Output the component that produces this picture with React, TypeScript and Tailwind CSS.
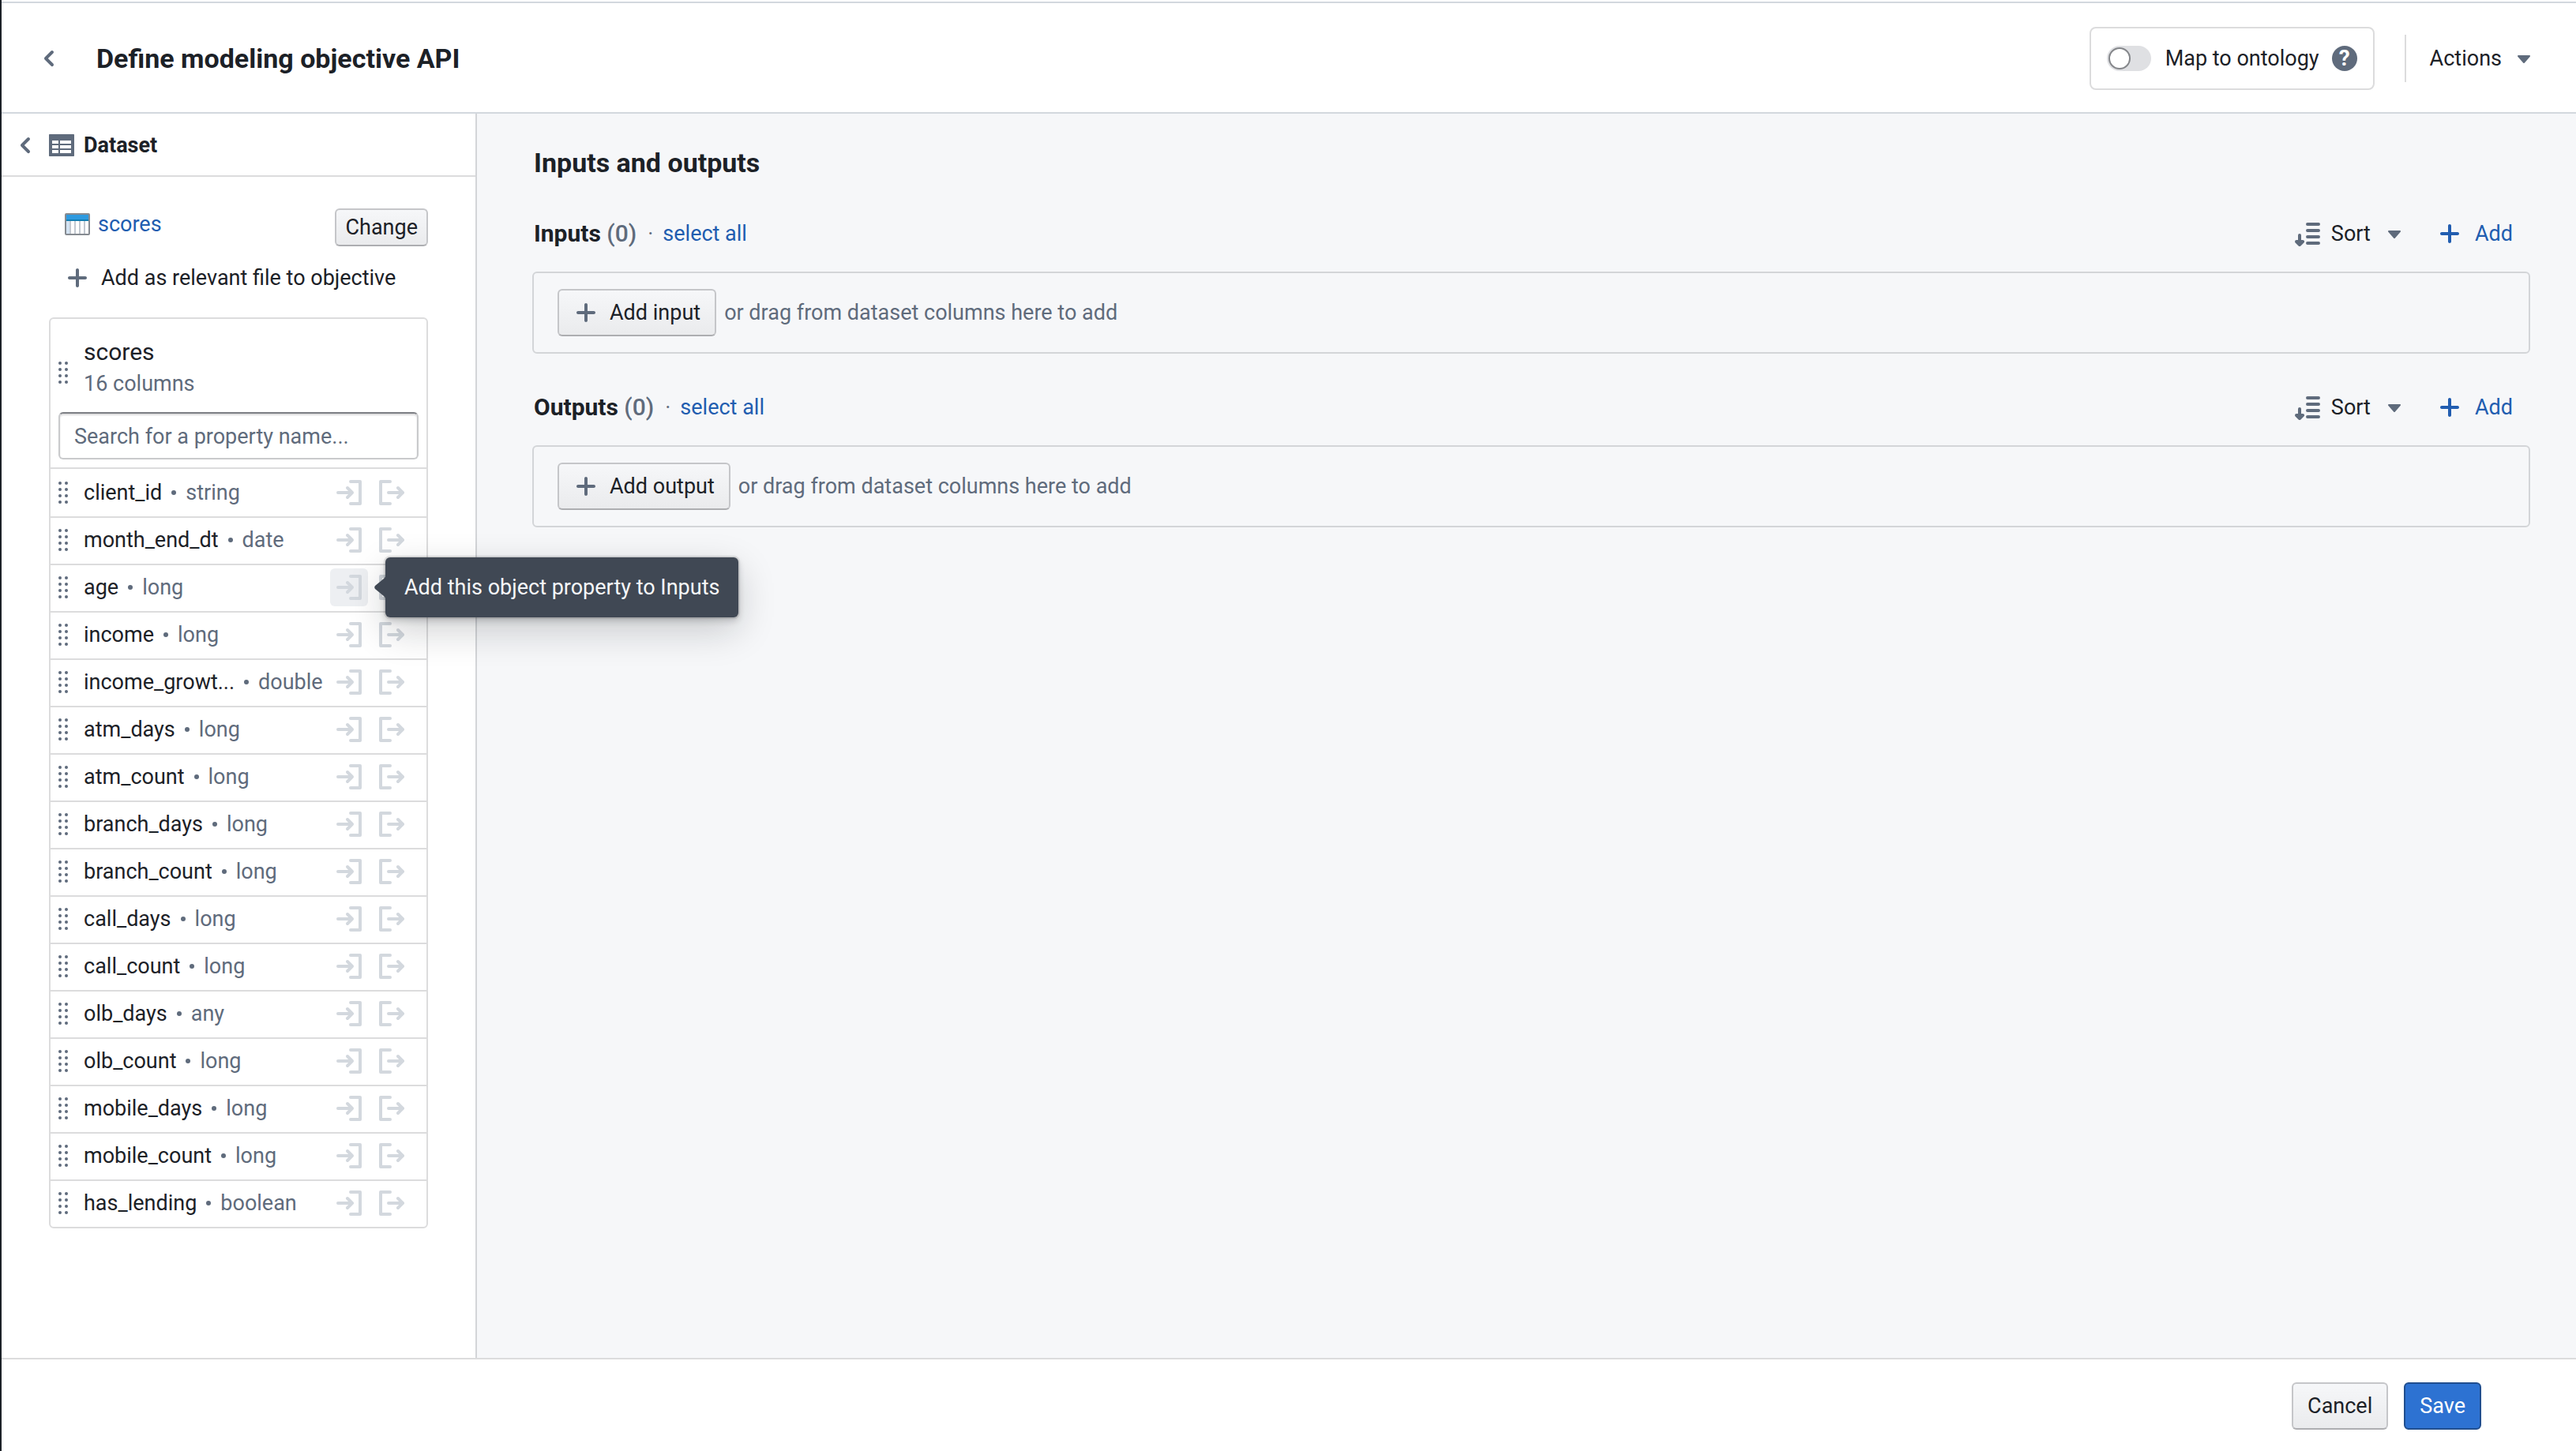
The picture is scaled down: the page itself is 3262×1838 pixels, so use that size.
import React, { useState } from 'react';

type Column = { name: string; type: string };

const columns: Column[] = [
  { name: 'client_id', type: 'string' },
  { name: 'month_end_dt', type: 'date' },
  { name: 'age', type: 'long' },
  { name: 'income', type: 'long' },
  { name: 'income_growt...', type: 'double' },
  { name: 'atm_days', type: 'long' },
  { name: 'atm_count', type: 'long' },
  { name: 'branch_days', type: 'long' },
  { name: 'branch_count', type: 'long' },
  { name: 'call_days', type: 'long' },
  { name: 'call_count', type: 'long' },
  { name: 'olb_days', type: 'any' },
  { name: 'olb_count', type: 'long' },
  { name: 'mobile_days', type: 'long' },
  { name: 'mobile_count', type: 'long' },
  { name: 'has_lending', type: 'boolean' },
];

const defaultButton =
  'flex items-center justify-center rounded-md border-2 border-[#c5c6c9] border-b-[#adaeb1] bg-linear-to-b from-[#f6f7f9] to-[#eaebed] cursor-pointer';

function ChevronLeft() {
  return (
    <svg viewBox="0 0 16 16" className="size-8 shrink-0 fill-[#5f6b7c]" aria-hidden="true">
      <path d="M7.41 8l3.29-3.29c.19-.18.3-.43.3-.71a1.003 1.003 0 00-1.71-.71l-4 4C5.11 7.47 5 7.72 5 8c0 .28.11.53.29.71l4 4a1.003 1.003 0 001.42-1.42L7.41 8z" />
    </svg>
  );
}

function CaretDown() {
  return (
    <svg viewBox="0 0 16 16" className="size-8 shrink-0 fill-[#5f6b7c]" aria-hidden="true">
      <path d="M12 6.5c0-.28-.22-.5-.5-.5h-7a.495.495 0 00-.37.83l3.5 4c.09.1.22.17.37.17s.28-.07.37-.17l3.5-4c.08-.09.13-.2.13-.33z" />
    </svg>
  );
}

function Plus() {
  return (
    <svg viewBox="0 0 16 16" className="size-8 shrink-0 fill-current" aria-hidden="true">
      <path d="M13 7H9V3c0-.55-.45-1-1-1s-1 .45-1 1v4H3c-.55 0-1 .45-1 1s.45 1 1 1h4v4c0 .55.45 1 1 1s1-.45 1-1V9h4c.55 0 1-.45 1-1s-.45-1-1-1z" />
    </svg>
  );
}

function TableIcon() {
  return (
    <svg viewBox="0 0 16 16" className="size-8 shrink-0 fill-[#5f6b7c]" aria-hidden="true">
      <path d="M15.5 1H.5c-.3 0-.5.2-.5.5v13c0 .3.2.5.5.5h15c.3 0 .5-.2.5-.5v-13c0-.3-.2-.5-.5-.5zM6 13H2v-2h4v2zm0-3H2V8h4v2zm0-3H2V5h4v2zm8 6H7v-2h7v2zm0-3H7V8h7v2zm0-3H7V5h7v2z" />
    </svg>
  );
}

function DatasetIcon() {
  return (
    <svg viewBox="0 0 32 32" className="size-8 shrink-0" aria-hidden="true">
      <rect x="1" y="3" width="30" height="26" rx="1" fill="#fff" stroke="#868b91" strokeWidth="2" />
      <rect x="2" y="4" width="28" height="8" fill="#2e9ae0" />
      <rect x="2" y="10" width="28" height="2" fill="#147eb3" />
      <rect x="2" y="12" width="5" height="16" fill="#d3e3f3" />
      <path d="M7 12v16M13 12v16M19 12v16M25 12v16" stroke="#c3c9d1" strokeWidth="2" />
    </svg>
  );
}

function DragHandle() {
  return (
    <svg viewBox="0 0 16 16" className="size-8 shrink-0 fill-[#5f6b7c]" aria-hidden="true">
      {[2, 6, 10, 14].map(y => (
        <React.Fragment key={y}>
          <circle cx="6" cy={y} r="1" />
          <circle cx="10" cy={y} r="1" />
        </React.Fragment>
      ))}
    </svg>
  );
}

function SortIcon() {
  return (
    <svg
      viewBox="0 0 16 16"
      className="size-8 shrink-0 fill-none stroke-[#5f6b7c] stroke-2"
      strokeLinecap="round"
      strokeLinejoin="round"
      aria-hidden="true"
    >
      <path d="M8 2h7M8 6h7M8 10h7M8 14h7M3 9v5M1 13l2 2 2-2z" />
    </svg>
  );
}

function LogInIcon() {
  return (
    <svg
      viewBox="0 0 16 16"
      className="size-8 fill-none stroke-[#d3d8de] stroke-2"
      strokeLinecap="round"
      strokeLinejoin="round"
      aria-hidden="true"
    >
      <path d="M9 1h6v14H9M1 8h8M7 5l3 3-3 3" />
    </svg>
  );
}

function LogOutIcon() {
  return (
    <svg
      viewBox="0 0 16 16"
      className="size-8 fill-none stroke-[#d3d8de] stroke-2"
      strokeLinecap="round"
      strokeLinejoin="round"
      aria-hidden="true"
    >
      <path d="M7 1H1v14h6M6 8h8M12 5l3 3-3 3" />
    </svg>
  );
}

function Tooltip({ text }: { text: string }) {
  return (
    <div
      role="tooltip"
      className="absolute left-[70px] top-1/2 z-10 flex h-[76px] -translate-y-1/2 items-center whitespace-nowrap rounded-md bg-[#404854] px-6 text-[#f6f7f9] shadow-[0_0_0_2px_rgba(17,20,24,0.1),0_4px_8px_rgba(17,20,24,0.2),0_16px_48px_rgba(17,20,24,0.2)]"
    >
      <svg viewBox="0 0 16 36" className="absolute -left-[15px] top-5 h-9 w-4 fill-[#404854]" aria-hidden="true">
        <path d="M16 0c0 3-1 5-3 7L2 16c-1 1-1 3 0 4l11 9c2 2 3 4 3 7z" />
      </svg>
      {text}
    </div>
  );
}

function ColumnRow({ column, active }: { column: Column; active: boolean }) {
  return (
    <li className="flex h-[60px] items-center pr-5 shadow-[inset_0_2px_0_#dcdcdd] first:shadow-none">
      <DragHandle />
      <span className="ml-[10px] text-[#1c2127]">{column.name}</span>
      <span className="mx-3 size-[6px] shrink-0 rounded-full bg-[#5f6b7c]" />
      <span className="text-[#5f6b7c]">{column.type}</span>
      <div className="ml-auto flex gap-[6px]">
        <div className="relative">
          <button
            type="button"
            aria-label={`Add ${column.name} to inputs`}
            className={`flex size-12 items-center justify-center rounded-md cursor-pointer ${active ? 'bg-[#edeff2]' : ''}`}
          >
            <LogInIcon />
          </button>
          {active && <Tooltip text="Add this object property to Inputs" />}
        </div>
        <button
          type="button"
          aria-label={`Add ${column.name} to outputs`}
          className="flex size-12 items-center justify-center rounded-md cursor-pointer"
        >
          <LogOutIcon />
        </button>
      </div>
    </li>
  );
}

function DropSection({ title, action }: { title: string; action: string }) {
  return (
    <section className="mb-[38px]">
      <div className="flex h-[60px] items-center pl-[2px] pr-[22px]">
        <h3 className="text-[30px] font-bold">
          {title} <span className="font-medium text-[#5f6b7c]">(0)</span>
        </h3>
        <span className="ml-[14px] mr-3 text-[#5f6b7c]">·</span>
        <a href="#" className="text-[#215db0]">select all</a>
        <button type="button" className="ml-auto flex items-center cursor-pointer">
          <SortIcon />
          <span className="ml-[14px] mr-[14px]">Sort</span>
          <CaretDown />
        </button>
        <button type="button" className="ml-[38px] flex items-center gap-4 text-[#215db0] cursor-pointer">
          <Plus />
          Add
        </button>
      </div>
      <div className="mt-[18px] flex h-[104px] items-center rounded-md border-2 border-[#d3d5d8] pl-[30px]">
        <button type="button" className={`${defaultButton} h-[60px] px-[18px]`}>
          <span className="mr-[14px] flex text-[#5f6b7c]"><Plus /></span>
          {action}
        </button>
        <span className="ml-[10px] text-[#5f6b7c]">or drag from dataset columns here to add</span>
      </div>
    </section>
  );
}

export default function App() {
  const [mapped, setMapped] = useState(false);
  const [query, setQuery] = useState('');

  return (
    <div className="flex min-h-screen flex-col border-l-2 border-[#1c2127] bg-white font-['Roboto',sans-serif] text-[27px] leading-9 text-[#1c2127]">
      {/* Header */}
      <header className="mt-[2px] flex h-[142px] items-center border-y-2 border-[#d3d8de] pl-11 pr-[50px] pt-[2px]">
        <button type="button" aria-label="Back" className="flex cursor-pointer"><ChevronLeft /></button>
        <h1 className="ml-11 text-[34px] font-bold">Define modeling objective API</h1>
        <div className="ml-auto flex h-20 items-center rounded-lg border-2 border-[#dcdcdd] px-5">
          <label className="flex items-center gap-[18px] cursor-pointer">
            <input
              type="checkbox"
              role="switch"
              checked={mapped}
              onChange={e => setMapped(e.target.checked)}
              className="peer sr-only"
            />
            <span className="flex h-8 w-14 items-center rounded-full bg-[#dfe0e3] p-[2px] peer-checked:justify-end peer-checked:bg-[#2d72d2]">
              <span className="size-7 rounded-full border-2 border-[#84868a] bg-white" />
            </span>
            Map to ontology
          </label>
          <button
            type="button"
            aria-label="Help"
            className="ml-4 flex size-8 items-center justify-center rounded-full bg-[#5f6b7c] text-[28px] font-bold text-white cursor-pointer"
          >
            ?
          </button>
        </div>
        <div className="ml-[38px] h-[60px] w-[2px] bg-[#dcdcdd]" />
        <button type="button" className="ml-[30px] flex items-center gap-3 cursor-pointer">
          Actions
          <CaretDown />
        </button>
      </header>

      <div className="flex flex-1">
        {/* Dataset panel */}
        <aside className="w-[602px] shrink-0 border-r-2 border-[#d3d5d8]">
          <div className="flex h-20 items-center border-b-2 border-[#dcdcdd] pl-[14px] pt-[2px]">
            <button type="button" aria-label="Collapse" className="flex cursor-pointer"><ChevronLeft /></button>
            <span className="ml-[14px] flex"><TableIcon /></span>
            <h2 className="ml-3 font-bold">Dataset</h2>
          </div>

          <div className="px-[60px] pt-10">
            <div className="flex items-start pl-5">
              <a href="#" className="mt-[2px] flex items-center gap-[10px] text-[#215db0]">
                <DatasetIcon />
                scores
              </a>
              <button type="button" className={`${defaultButton} ml-auto h-12 px-[11px]`}>Change</button>
            </div>
            <button type="button" className="mt-[22px] flex items-center gap-[14px] pl-5 cursor-pointer">
              <span className="flex text-[#5f6b7c]"><Plus /></span>
              Add as relevant file to objective
            </button>

            <div className="mt-8 rounded-md border-2 border-[#dcdcdd]">
              <div className="flex items-center pt-[22px]">
                <span className="mt-3 flex"><DragHandle /></span>
                <div className="ml-[10px]">
                  <div className="text-[30px] leading-10">scores</div>
                  <div className="text-[#5f6b7c] leading-10">16 columns</div>
                </div>
              </div>
              <div className="border-b-2 border-[#dcdcdd] px-[10px] pb-[10px] pt-4">
                <input
                  type="text"
                  aria-label="Search for a property name"
                  placeholder="Search for a property name..."
                  value={query}
                  onChange={e => setQuery(e.target.value)}
                  className="h-[60px] w-full rounded-md border-2 border-[#c9cacc] border-t-[#7d7f84] px-[18px] pt-[2px] shadow-[inset_0_2px_2px_rgba(17,20,24,0.15)] outline-none placeholder:text-[#5f6b7c]"
                />
              </div>
              <ul>
                {columns.map(column => (
                  <ColumnRow key={column.name} column={column} active={column.name === 'age'} />
                ))}
              </ul>
            </div>
          </div>
        </aside>

        {/* Inputs and outputs */}
        <main className="min-w-0 flex-1 bg-[#f6f7f9] pl-[70px] pr-[58px] pt-10">
          <h2 className="mb-[38px] pl-[2px] text-[34px] font-bold leading-[44px]">Inputs and outputs</h2>
          <DropSection title="Inputs" action="Add input" />
          <DropSection title="Outputs" action="Add output" />
        </main>
      </div>

      {/* Footer */}
      <footer className="flex h-[118px] items-center justify-end gap-5 border-t-2 border-[#dcdcdd] pr-[120px] pt-[2px]">
        <button type="button" className={`${defaultButton} h-[60px] px-[18px]`}>Cancel</button>
        <button
          type="button"
          className="flex h-[60px] items-center rounded-md border-2 border-[#204e8f] bg-[#2d72d2] px-[18px] text-white cursor-pointer"
        >
          Save
        </button>
      </footer>
    </div>
  );
}
